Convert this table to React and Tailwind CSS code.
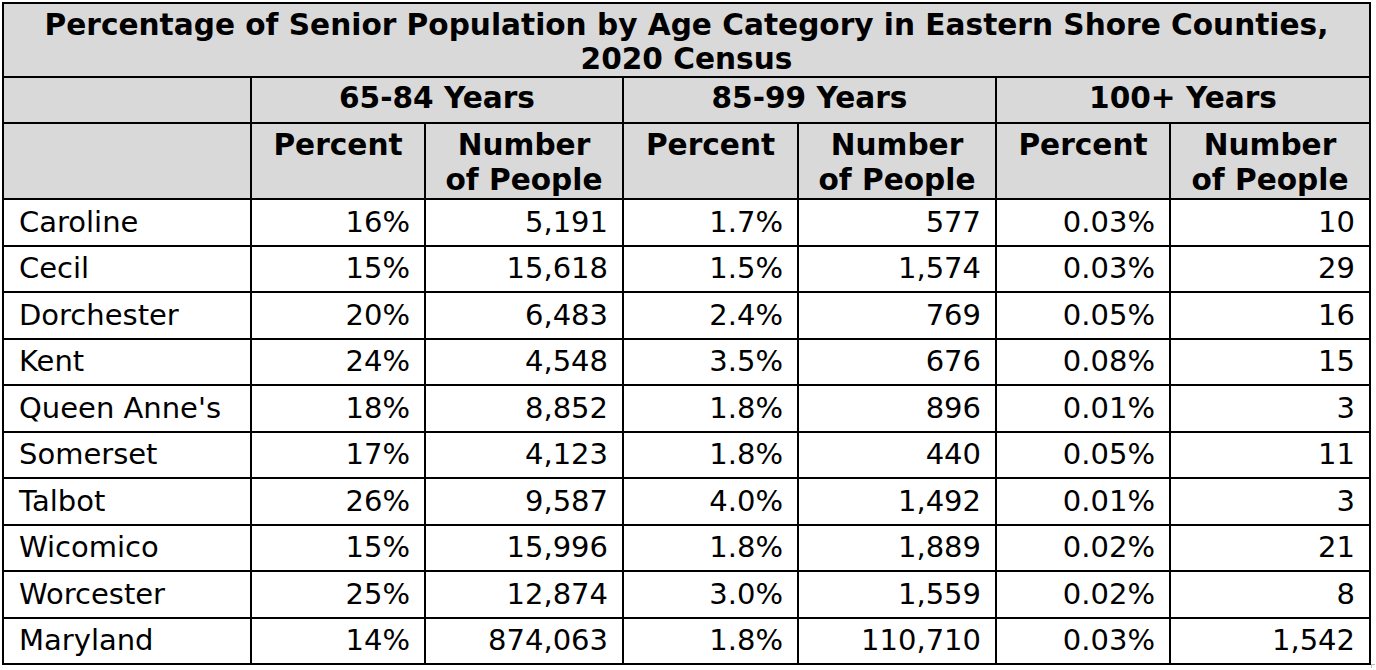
import React from "react";

const rows = [
  ["Caroline", "16%", "5,191", "1.7%", "577", "0.03%", "10"],
  ["Cecil", "15%", "15,618", "1.5%", "1,574", "0.03%", "29"],
  ["Dorchester", "20%", "6,483", "2.4%", "769", "0.05%", "16"],
  ["Kent", "24%", "4,548", "3.5%", "676", "0.08%", "15"],
  ["Queen Anne's", "18%", "8,852", "1.8%", "896", "0.01%", "3"],
  ["Somerset", "17%", "4,123", "1.8%", "440", "0.05%", "11"],
  ["Talbot", "26%", "9,587", "4.0%", "1,492", "0.01%", "3"],
  ["Wicomico", "15%", "15,996", "1.8%", "1,889", "0.02%", "21"],
  ["Worcester", "25%", "12,874", "3.0%", "1,559", "0.02%", "8"],
  ["Maryland", "14%", "874,063", "1.8%", "110,710", "0.03%", "1,542"],
];

const App = () => {
  return (
    <div className="relative bg-white w-[1376px] h-[670px] pt-[2px] pl-[2px] font-['DejaVu_Sans',Verdana,sans-serif] text-black text-[29px]">
      <table className="table-fixed border-collapse border-2 border-black w-[1367px]">
        <colgroup>
          <col className="w-[248px]" />
          <col className="w-[174px]" />
          <col className="w-[198px]" />
          <col className="w-[175px]" />
          <col className="w-[198px]" />
          <col className="w-[174px]" />
          <col className="w-[200px]" />
        </colgroup>
        <thead className="bg-[#d9d9d9] font-bold text-[29.6px]">
          {/* Title */}
          <tr className="h-[74px]">
            <th colSpan={7} className="border-2 border-black px-4 pt-[3px] pb-0 leading-[34px] text-center align-middle">
              Percentage of Senior Population by Age Category in Eastern Shore Counties,
              <br />
              2020 Census
            </th>
          </tr>
          {/* Age groups */}
          <tr className="h-[46px]">
            <th className="border-2 border-black"></th>
            <th colSpan={2} className="border-2 border-black pb-[4px] leading-[35px] text-center">
              65-84 Years
            </th>
            <th colSpan={2} className="border-2 border-black pb-[4px] leading-[35px] text-center">
              85-99 Years
            </th>
            <th colSpan={2} className="border-2 border-black pb-[4px] leading-[35px] text-center">
              100+ Years
            </th>
          </tr>
          {/* Sub headers */}
          <tr className="h-[75px]">
            <th className="border-2 border-black"></th>
            {[0, 1, 2].map((i) => (
              <React.Fragment key={i}>
                <th className="border-2 border-black align-top pt-[4px] leading-[35px] text-center">
                  Percent
                </th>
                <th className="border-2 border-black align-top pt-[4px] leading-[35px] text-center">
                  Number
                  <br />
                  of People
                </th>
              </React.Fragment>
            ))}
          </tr>
        </thead>
        <tbody>
          {rows.map((r) => (
            <tr key={r[0]} className="h-[46.5px]">
              <td className="border-2 border-black pl-[15px] leading-[35px] text-left">{r[0]}</td>
              {r.slice(1).map((v, i) => (
                <td key={i} className="border-2 border-black pr-[14px] leading-[35px] text-right">
                  {v}
                </td>
              ))}
            </tr>
          ))}
        </tbody>
      </table>
      {/* resize handle mark */}
      <span className="absolute left-[1371px] top-[664px] w-[4px] h-[4px] border-l border-t border-[#bbbbbb]"></span>
    </div>
  );
};

export default App;
